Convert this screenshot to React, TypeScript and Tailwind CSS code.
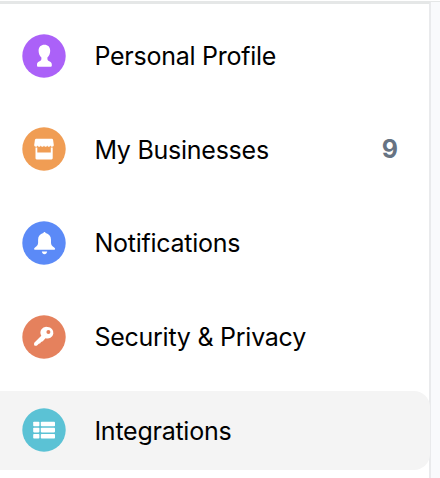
import React from 'react';

interface MenuItemProps {
    label: string;
    color: string;
    icon: React.ReactNode;
    count?: number;
    active?: boolean;
}

function MenuItem({ label, color, icon, count, active }: MenuItemProps) {
    return (
        <a className={`relative flex h-[78.6px] items-center rounded-r-2xl pr-8 pl-[22px] ${active ? 'bg-[#f4f4f4]' : ''}`}>
            <svg viewBox="0 0 44 44" className={`h-11 w-11 shrink-0 ${color}`} fill="currentColor">
                <circle cx="22" cy="22" r="21.7" />
                {icon}
            </svg>
            <span className="ml-[28.4px] pt-[0.6px] text-[25px] leading-8 tracking-[-0.25px] whitespace-nowrap text-black">{label}</span>
            {count !== undefined && <span className="ml-auto text-[25px] leading-8 font-bold text-[#677383]">{count}</span>}
        </a>
    );
}

const personIcon = (
    <path
        className="fill-white"
        d="M22.4 10.8c3.5 0 5.8 2.3 5.8 6 0 2.8-1.2 5.3-2.8 6.7v.9c0 1.8.9 2.6 2.3 3 1.4.5 2.1 1.5 2.1 3v1.2c0 .8-.3 1.2-.9 1.2h-13c-.6 0-.9-.4-.9-1.2v-1.2c0-1.5.7-2.5 2.1-3 1.4-.4 2.3-1.2 2.3-3v-.9c-1.6-1.4-2.8-3.9-2.8-6.7 0-3.7 2.3-6 5.8-6Z"
    />
);

const storeIcon = (
    <g className="fill-white">
        <path d="M14.8 11.8h14.6c1 0 1.6.5 1.7 1.3l.7 5c0 1-.6 1.7-1.7 1.7-.9 0-1.5-.6-1.8-1.4-.3.8-.8 1.4-1.5 1.4s-1.3-.6-1.6-1.4c-.3.8-.8 1.4-1.6 1.4s-1.3-.6-1.6-1.4c-.3.8-.8 1.4-1.6 1.4s-1.3-.6-1.6-1.4c-.3.8-.8 1.4-1.6 1.4s-1.2-.6-1.5-1.4c-.3.8-.9 1.4-1.8 1.4-1.1 0-1.7-.7-1.7-1.7l.7-5c.1-.8.8-1.3 1.9-1.3Z" />
        <path d="M13.5 20.6h1.8v4.9h13.5v-4.9h1.9v10.5c0 .9-.4 1.3-1.2 1.3H14.7c-.8 0-1.2-.4-1.2-1.3Z" />
    </g>
);

const bellIcon = (
    <g className="fill-white">
        <path d="M22.5 10.9c.6 0 .9.5 1.2 1.1 3.4.9 5.3 3.3 5.3 6.7v3c0 2.4 1.3 3.5 3.2 4.7.7.4.9.9.9 1.3 0 .6-.4 1-1.1 1H13.2c-.7 0-1.1-.4-1.1-1 0-.4.2-.9.9-1.3 1.8-1.2 3.1-2.3 3.1-4.7v-3c0-3.4 1.8-5.8 5.2-6.7.3-.6.6-1.1 1.2-1.1Z" />
        <path d="M19.8 30.6h5.4c-.3 1.7-1.3 2.6-2.7 2.6s-2.4-.9-2.7-2.6Z" />
    </g>
);

const keyIcon = (
    <path
        className="fill-white"
        fillRule="evenodd"
        d="M25.4 12a5.8 5.8 0 1 1-1.9 11.2l-2 2.3-1.1 1.1-1.4.5-.7 1.1-1.5.5-1.5 1.5c-.6.6-2.3.7-2.9.2-.5-.6-.4-2.2.1-2.8l6.8-6.9A5.8 5.8 0 0 1 25.4 12Zm1 3.1a2 2 0 1 0 0 4 2 2 0 0 0 0-4Z"
    />
);

const listIcon = (
    <g className="fill-white">
        <rect x="11.2" y="13.7" width="6.2" height="4.6" rx="0.8" />
        <rect x="18.8" y="13.7" width="14.2" height="4.6" rx="0.8" />
        <rect x="11.2" y="19.8" width="6.2" height="4.6" rx="0.8" />
        <rect x="18.8" y="19.8" width="14.2" height="4.6" rx="0.8" />
        <rect x="11.2" y="26" width="6.2" height="4.6" rx="0.8" />
        <rect x="18.8" y="26" width="14.2" height="4.6" rx="0.8" />
    </g>
);

export default function App() {
    return (
        <div className="flex h-[478px] w-[440px] overflow-hidden bg-white pt-px font-['Inter',sans-serif]">
            <aside className="w-[431px] shrink-0 border-t-[3px] border-r-2 border-t-[#e5e7e7] border-r-[#e9eaec] bg-white">
                <nav className="-mr-px flex flex-col gap-[15px] pt-[12.6px]">
                    <MenuItem label="Personal Profile" color="text-[#ab61f8]" icon={personIcon} />
                    <MenuItem label="My Businesses" color="text-[#f09d54]" icon={storeIcon} count={9} />
                    <MenuItem label="Notifications" color="text-[#5b8af7]" icon={bellIcon} />
                    <MenuItem label="Security & Privacy" color="text-[#e5815d]" icon={keyIcon} />
                    <MenuItem label="Integrations" color="text-[#5bc2d5]" icon={listIcon} active />
                </nav>
            </aside>
            <div className="flex-1 border-t border-[#e5e7e7] bg-[#f9fafc]" />
        </div>
    );
}
